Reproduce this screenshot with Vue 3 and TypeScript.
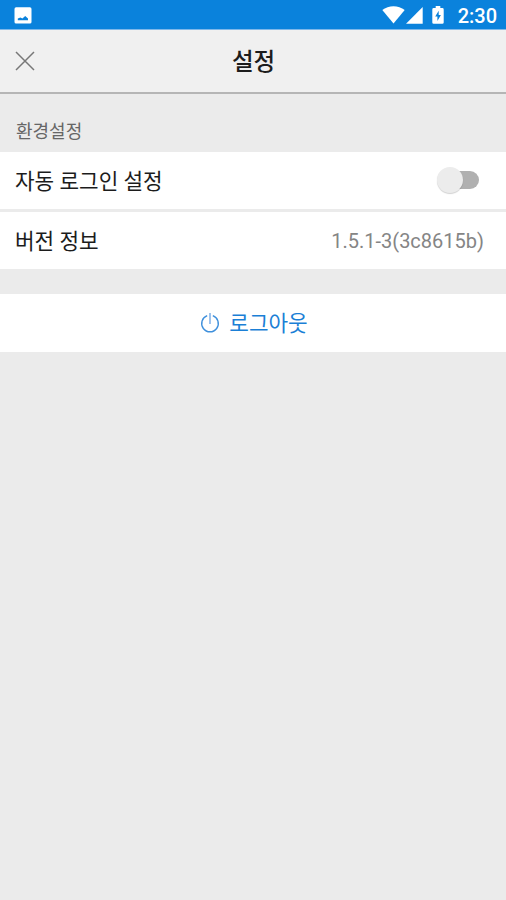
<script setup lang="ts">
import { ref } from 'vue'

const autoLogin = ref<boolean>(false)
const version = '1.5.1-3(3c8615b)'
</script>

<template>
  <div class="screen">
    <div class="status">
      <svg class="picture" width="18" height="17" viewBox="0 0 18 17">
        <rect x="0.5" y="0.3" width="17" height="16.2" rx="1.6" fill="#fff" />
        <path d="M3.8 13.2v-1.6l2.6-1.2 2 1 2.8-2.4 2.8 2.6v1.6z" fill="#0a82dc" />
      </svg>
      <div class="indicators">
        <svg class="wifi" width="23" height="18" viewBox="0 0 23 18">
          <path d="M0.3 4C6.5-1.1 16.5-1.1 22.7 4L11.5 17.5z" fill="#fff" />
        </svg>
        <svg class="signal" width="17" height="17" viewBox="0 0 17 17">
          <path d="M16.7 0v16.7H0z" fill="#fff" />
        </svg>
        <svg class="battery" width="12" height="18" viewBox="0 0 12 18">
          <path d="M3.7 0h4.6v2h2Q11.7 2 11.7 3.4v13q0 1.4-1.4 1.4H1.7Q.3 17.8.3 16.4v-13Q.3 2 1.7 2h2z" fill="#fff" />
          <path d="M6.7 4.7L3.2 10.5h2.2v4.6l3.5-6H6.7z" fill="#0a82dc" />
        </svg>
        <span class="time">2:30</span>
      </div>
    </div>
    <header class="header">
      <button class="close" aria-label="닫기">
        <svg width="20" height="20" viewBox="0 0 20 20">
          <path d="M1 1l18 18M19 1L1 19" stroke="#777" stroke-width="1.5" fill="none" />
        </svg>
      </button>
      <h1 class="title">설정</h1>
    </header>
    <h2 class="section">환경설정</h2>
    <div class="list">
      <div class="row">
        <span class="label">자동 로그인 설정</span>
        <button class="toggle" :class="{ on: autoLogin }" role="switch" :aria-checked="autoLogin" @click="autoLogin = !autoLogin">
          <span class="knob"></span>
        </button>
      </div>
      <div class="row">
        <span class="label">버전 정보</span>
        <span class="version">{{ version }}</span>
      </div>
    </div>
    <button class="logout">
      <svg width="20" height="22" viewBox="0 0 20 22">
        <path d="M7.2 3.7a8.3 8.3 0 1 0 5.6 0" stroke="#3f90dc" stroke-width="1.4" fill="none" />
        <path d="M10 1v11" stroke="#8db9ea" stroke-width="1.7" />
      </svg>
      <span class="label">로그아웃</span>
    </button>
  </div>
</template>

<style>
body {
  margin: 0;
  background: #ebebeb;
}
</style>

<style scoped>
.screen {
  min-height: 900px;
  background: #ebebeb;
  font-family: Roboto, "Noto Sans CJK KR", sans-serif;
  color: #1c1c1c;
}
button {
  margin: 0;
  padding: 0;
  border: 0;
  background: none;
  font: inherit;
}
svg {
  display: block;
}
.status {
  box-sizing: border-box;
  height: 30px;
  padding: 0 9px 0 14px;
  display: flex;
  align-items: center;
  justify-content: space-between;
  background: #0a82dc;
  border-bottom: 1px solid #7fb8ea;
}
.picture {
  margin-top: 2px;
}
.indicators {
  display: flex;
  align-items: center;
}
.wifi {
  margin-top: 1px;
}
.signal {
  margin: 2px 9px 0 1px;
}
.battery {
  margin-top: 1px;
}
.time {
  margin: 3px 0 0 14px;
  font-size: 20px;
  line-height: 24px;
  font-weight: 500;
  color: #fff;
}
.header {
  box-sizing: border-box;
  height: 64px;
  padding: 0 15px;
  display: grid;
  grid-template-columns: 20px 1fr 20px;
  align-items: center;
  background: #f0f0f0;
  border-bottom: 2px solid #b5b5b5;
}
.title {
  margin: 2px 0 0 1px;
  font-size: 23.5px;
  line-height: 32px;
  font-weight: 500;
  text-align: center;
}
.section {
  box-sizing: border-box;
  height: 58px;
  margin: 0;
  padding: 25px 16px 0;
  font-size: 18px;
  line-height: 26px;
  font-weight: 400;
  color: #666;
}
.list {
  display: grid;
  gap: 3px;
}
.row {
  box-sizing: border-box;
  height: 57px;
  padding: 0 22px 0 15px;
  display: flex;
  align-items: center;
  justify-content: space-between;
  background: #fff;
  font-size: 21.3px;
  line-height: 30px;
}
.label {
  padding-top: 2px;
}
.toggle {
  width: 33px;
  height: 18px;
  margin: -1px 5px 0 0;
  display: flex;
  align-items: center;
  border-radius: 9px;
  background: #b0b0b0;
}
.knob {
  flex: none;
  width: 26px;
  height: 26px;
  margin-left: -9px;
  border-radius: 50%;
  background: #ececec;
  box-shadow: 0 1px 1px rgba(0, 0, 0, 0.18);
}
.toggle.on {
  background: #8fc4ef;
}
.toggle.on .knob {
  margin-left: 16px;
  background: #0a82dc;
}
.version {
  font-size: 20px;
  color: #858585;
}
.logout {
  width: 100%;
  height: 58px;
  margin-top: 25px;
  padding-left: 2px;
  display: flex;
  align-items: center;
  justify-content: center;
  gap: 9px;
  background: #fff;
  font-size: 21.3px;
  line-height: 30px;
  color: #1b7fd6;
}
</style>
